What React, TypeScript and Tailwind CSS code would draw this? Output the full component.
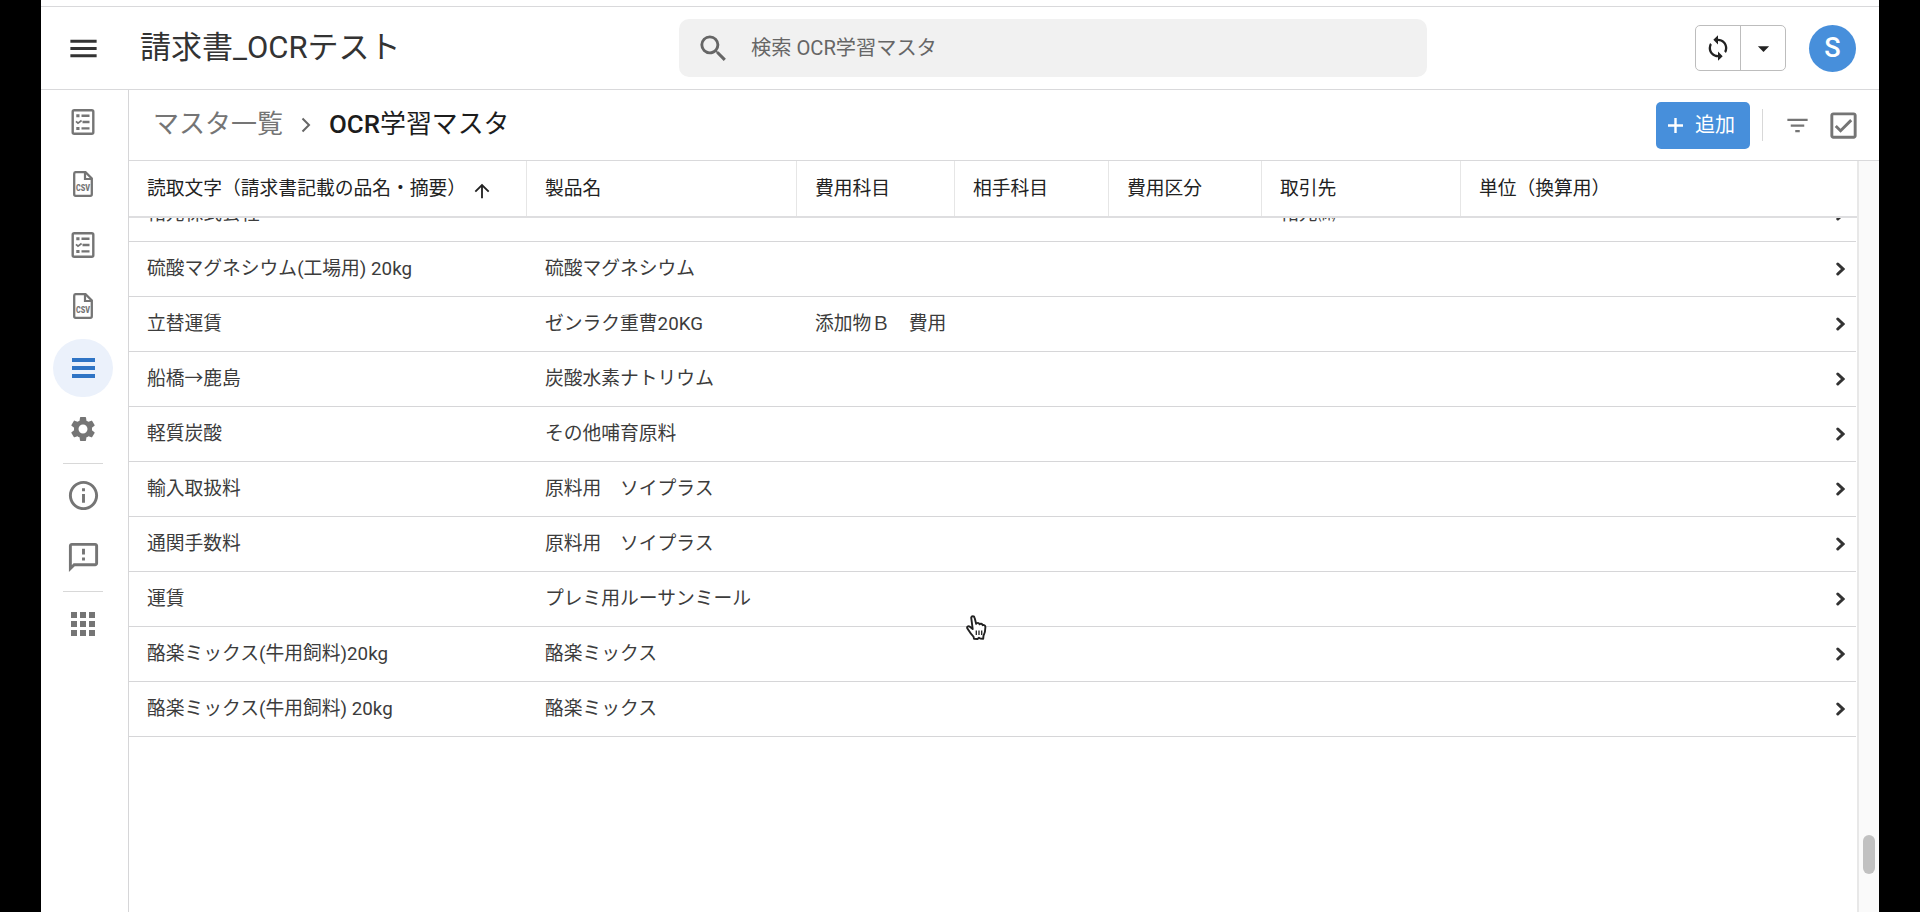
import type { ReactNode } from 'react';
import {
  MdApps,
  MdArrowDropDown,
  MdArrowUpward,
  MdFilterList,
  MdInfoOutline,
  MdMenu,
  MdOutlineCheckBox,
  MdOutlineFeedback,
  MdSearch,
  MdSettings,
  MdSync,
} from 'react-icons/md';

const columns = [
  { label: '読取文字（請求書記載の品名・摘要）', sorted: true },
  { label: '製品名' },
  { label: '費用科目' },
  { label: '相手科目' },
  { label: '費用区分' },
  { label: '取引先' },
  { label: '単位（換算用）' },
];

const rows = [
  { text: '祐元株式会社', partner: '祐元㈱' },
  { text: '硫酸マグネシウム(工場用) 20kg', product: '硫酸マグネシウム' },
  { text: '立替運賃', product: 'ゼンラク重曹20KG', account: '添加物Ｂ　費用' },
  { text: '船橋→鹿島', product: '炭酸水素ナトリウム' },
  { text: '軽質炭酸', product: 'その他哺育原料' },
  { text: '輸入取扱料', product: '原料用　ソイプラス' },
  { text: '通関手数料', product: '原料用　ソイプラス' },
  { text: '運賃', product: 'プレミ用ルーサンミール' },
  { text: '酪楽ミックス(牛用飼料)20kg', product: '酪楽ミックス' },
  { text: '酪楽ミックス(牛用飼料) 20kg', product: '酪楽ミックス' },
];

const gridCols = 'grid grid-cols-[398px_270px_158px_154px_153px_199px_1fr]';

function ListIcon() {
  return (
    <svg viewBox="0 0 24 26" className="w-6 h-[26px]" fill="none" stroke="currentColor" aria-hidden="true">
      <rect x="1.7" y="1.2" width="20.6" height="23.6" rx="1.5" strokeWidth="2.4" />
      <path d="M10.5 6.8h8M11.5 13h7M10.5 19.4h8" strokeWidth="2.4" />
      <path d="M5.3 6.8h3.2M5.3 19.4h3.2" strokeWidth="3" />
      <path d="M5 12.4l2 1.8 3.6-2.6" strokeWidth="1.8" />
    </svg>
  );
}

function CsvIcon() {
  return (
    <svg viewBox="0 0 20 26" className="w-5 h-[26px]" fill="none" stroke="currentColor" aria-hidden="true">
      <path d="M2.5 1.2h10L18.800 7.5V23.300a1.5 1.5 0 0 1-1.5 1.5h-14.600A1.5 1.5 0 0 1 1.2 23.300v-20.600A1.5 1.5 0 0 1 2.5 1.2z" strokeWidth="2.3" />
      <path d="M12 1.5V8h6.5" strokeWidth="2.2" />
      <text x="10" y="19.8" textAnchor="middle" fontSize="9" fontWeight="900" fill="currentColor" stroke="none" textLength="14" lengthAdjust="spacingAndGlyphs">
        CSV
      </text>
    </svg>
  );
}

function BarsIcon() {
  return (
    <svg viewBox="0 0 23 22" className="w-[23px] h-[22px]" stroke="currentColor" strokeWidth="4" aria-hidden="true">
      <path d="M0 3h23M0 11h23M0 19h23" />
    </svg>
  );
}

function HandCursor() {
  return (
    <svg viewBox="0 0 22 26" className="w-[22px] h-[26px]" fill="#fff" stroke="#222" strokeWidth="1.9" strokeLinejoin="round" aria-hidden="true">
      <path d="M5.2 2.6c.3-1.8 3-1.8 3.4.1l1.6 6.2c.8-1.5 3-1.3 3.3.4.9-1 2.8-.8 3.1.9 1.2-.7 2.8.2 2.8 1.9 0 4.3-.6 6.3-1.9 8.6l-.3 3-3-.2-1.2-.8-1.5 1.3-3.5-.1-.5-2.3C5 19.2 3 16.2 1.4 13.6c-.9-1.7.9-3.2 2.5-1.9l2.8 2.4z" />
      <path d="M10.3 15.5v4.5M13 15.5v4.5M15.7 15.5v4.5" strokeWidth="1.3" fill="none" />
    </svg>
  );
}

function NavItem({ active, children }: { active?: boolean; children: ReactNode }) {
  return (
    <div className="h-[61.4px] flex items-center justify-center">
      <div
        className={
          active
            ? 'w-[60px] h-[58px] rounded-full bg-[#ebf1fb] text-[#2f74c5] flex items-center justify-center'
            : 'flex items-center justify-center'
        }
      >
        {children}
      </div>
    </div>
  );
}

function Sidebar() {
  return (
    <nav className="w-[88px] shrink-0 border-r border-[#d6d6d8] text-[#757575] pt-[1.6px] pr-[3px]">
      <NavItem><ListIcon /></NavItem>
      <NavItem><CsvIcon /></NavItem>
      <NavItem><ListIcon /></NavItem>
      <NavItem><CsvIcon /></NavItem>
      <NavItem active><BarsIcon /></NavItem>
      <NavItem><MdSettings size={30} /></NavItem>
      <div className="mx-auto w-10 h-px bg-[#d8d8d8] mt-[2.9px]" />
      <div className="h-[64px] flex items-center justify-center"><MdInfoOutline size={35} /></div>
      <div className="h-[60px] flex items-center justify-center"><MdOutlineFeedback size={35} /></div>
      <div className="mx-auto w-10 h-px bg-[#d8d8d8] mt-[3px]" />
      <div className="h-[65px] flex items-center justify-center"><MdApps size={36} /></div>
    </nav>
  );
}

function Header() {
  return (
    <header className="h-[84px] shrink-0 border-y border-[#d9d9db] flex items-center">
      <MdMenu size={35} className="ml-[25px] text-[#333]" />
      <h1 className="ml-[39px] w-[539px] pb-[2px] text-[31px] leading-none text-[#333] whitespace-nowrap">請求書_OCRテスト</h1>
      <div className="w-[748px] h-[58px] rounded-[10px] bg-[#f1f1f1] text-[#666] flex items-center pl-[17px]">
        <MdSearch size={35} />
        <span className="ml-5 text-[20.2px]">検索 OCR学習マスタ</span>
      </div>
      <div className="ml-auto w-[91px] h-[46px] rounded-[5px] border border-[#bdbdbd] text-[#222] flex">
        <div className="w-[45px] flex items-center justify-center border-r border-[#bdbdbd]"><MdSync size={28} /></div>
        <div className="flex-1 flex items-center justify-center"><MdArrowDropDown size={27} /></div>
      </div>
      <div className="ml-[23px] mr-[23px] size-[47px] rounded-full bg-[#478fdb] text-white text-[27px] font-medium flex items-center justify-center">
        S
      </div>
    </header>
  );
}

function Toolbar() {
  return (
    <div className="h-[71px] shrink-0 border-b border-[#d9d9db] flex items-center text-[26px] whitespace-nowrap">
      <span className="ml-6 pb-[2px] text-[#757575]">マスタ一覧</span>
      <svg viewBox="0 0 10 16" className="ml-[18px] w-[10px] h-4" fill="none" stroke="#666" strokeWidth="2" aria-hidden="true">
        <path d="M1.5 1.5L8 8l-6.5 6.5" />
      </svg>
      <span className="ml-[18px] pb-[2px] text-[25.9px] text-[#1c1c1c]">
        <span className="font-medium">OCR</span>学習マスタ
      </span>
      <button className="ml-auto w-[94px] h-[47px] rounded-[5px] bg-[#478fdb] text-white text-[20px] flex items-center pl-3">
        <svg viewBox="0 0 15 15" className="size-[15px]" stroke="currentColor" strokeWidth="2.4" aria-hidden="true">
          <path d="M7.5 0v15M0 7.5h15" />
        </svg>
        <span className="ml-3">追加</span>
      </button>
      <div className="ml-3 w-px h-8 bg-[#d8d8d8]" />
      <MdFilterList size={27} className="ml-[21px] text-[#757575]" />
      <MdOutlineCheckBox size={35} className="ml-[15px] mr-[18px] text-[#757575]" />
    </div>
  );
}

function Table() {
  return (
    <div className="flex-1 min-w-0 flex flex-col overflow-hidden text-[18.78px] whitespace-nowrap">
      <div className={`${gridCols} h-[57px] shrink-0 border-b-2 border-[#dedee0] text-[#222]`}>
        {columns.map((col) => (
          <div key={col.label} className="flex items-center pl-[18px] pt-[2px] border-r border-[#e6e6e6] last:border-r-0">
            {col.label}
            {col.sorted && <MdArrowUpward size={22} className="ml-[5px] mt-[3px]" />}
          </div>
        ))}
      </div>
      <div className="flex-1 min-h-0 overflow-hidden">
        <div className="-mt-[31px]">
          {rows.map((row) => (
            <div key={row.text} className={`${gridCols} h-[55.06px] border-b border-[#d6d6d8] mr-px text-[#3c3c3c] items-center`}>
              <span className="pl-[18px]">{row.text}</span>
              <span className="pl-[18px]">{row.product}</span>
              <span className="pl-[18px]">{row.account}</span>
              <span />
              <span />
              <span className="pl-[18px]">{row.partner}</span>
              <svg viewBox="0 0 9 14" className="justify-self-end mr-[11px] w-[9px] h-[14px]" fill="none" stroke="#333" strokeWidth="3" strokeLinecap="round" aria-hidden="true">
                <path d="M1.8 2L7 7l-5.2 5" />
              </svg>
            </div>
          ))}
        </div>
      </div>
    </div>
  );
}

export default function App() {
  return (
    <div className="relative w-[1920px] h-[912px] overflow-hidden bg-black pl-[41px] pr-[41px] font-[Roboto,'Noto_Sans_CJK_JP',sans-serif]">
      <div className="h-full bg-white flex flex-col pt-[6px]">
        <Header />
        <div className="flex-1 min-h-0 flex">
          <Sidebar />
          <main className="flex-1 min-w-0 flex flex-col">
            <Toolbar />
            <div className="flex-1 min-h-0 flex">
              <Table />
              {/* scrollbar */}
              <div className="w-[22px] shrink-0 border-l-2 border-[#e8e8e8] bg-[#fafafa] pl-1 pt-[674px]">
                <div className="w-3 h-[39px] rounded-full bg-[#c1c1c1]" />
              </div>
            </div>
          </main>
        </div>
      </div>
      <div className="absolute left-[966px] top-[615px]">
        <HandCursor />
      </div>
    </div>
  );
}
